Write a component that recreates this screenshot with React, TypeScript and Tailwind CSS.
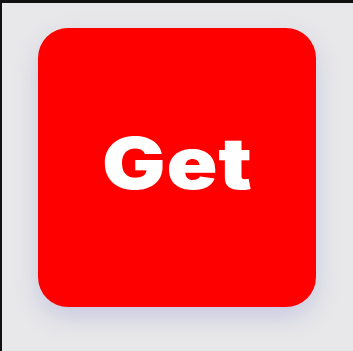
export default function App() {
  return (
    <div className="w-[353px] h-[351px] bg-[#111111] pt-[3px] pl-[2px]">
      <div className="w-full h-full bg-[#e8e8ea] pl-[36px] pt-[25px]">
        <div className="w-[278px] h-[279px] rounded-[30px] bg-[#ff0000] flex items-center justify-center shadow-[0_10px_24px_rgba(90,90,190,0.22)]">
          <span
            className="inline-block text-white text-[72px] font-black leading-none tracking-[0.01em] scale-x-[1.17] -mt-[10px] ml-0"
            style={{ fontFamily: "Inter, 'Noto Sans', sans-serif" }}
          >
            Get
          </span>
        </div>
      </div>
    </div>
  )
}
